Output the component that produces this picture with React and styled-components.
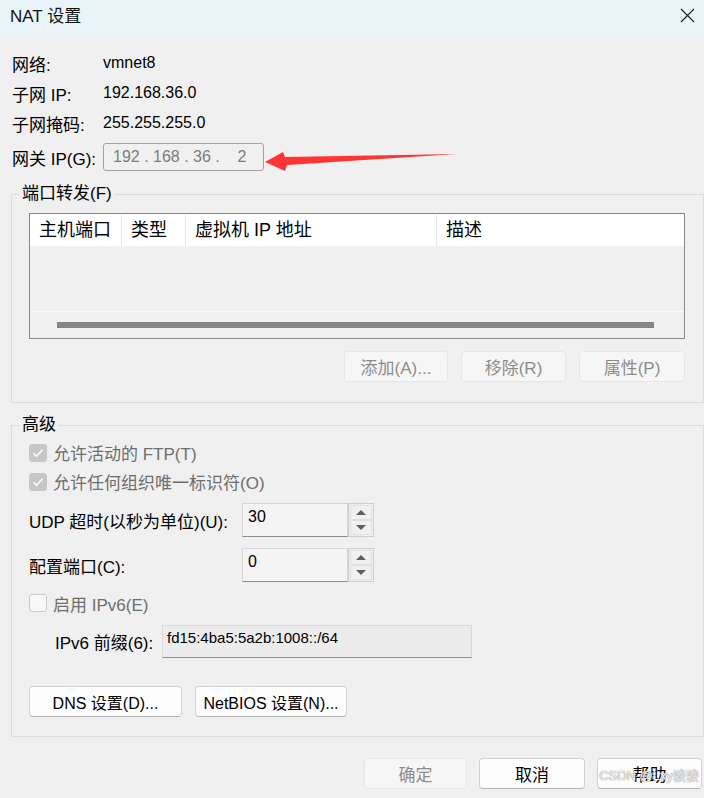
import styled, { createGlobalStyle } from "styled-components";

const GlobalStyle = createGlobalStyle`
  html, body {
    margin: 0;
    padding: 0;
    background: #f0f0f0;
  }
  body {
    font-family: "Liberation Sans", "Noto Sans CJK SC", sans-serif;
    color: #000;
  }
`;

const Window = styled.div`
  position: relative;
  width: 704px;
  height: 798px;
  overflow: hidden;
  background: #f0f0f0;
  display: flex;
  flex-direction: column;
`;

const TitleBar = styled.div`
  height: 38px;
  flex: none;
  box-sizing: border-box;
  padding: 2px 7px 0 10px;
  background: #e9f4f8;
  display: flex;
  align-items: flex-start;
  justify-content: space-between;
  font-size: 17px;
  color: #111;
`;

const CloseBtn = styled.div`
  width: 20px;
  height: 26px;
  display: flex;
  align-items: center;
  justify-content: center;
`;

const Body = styled.div`
  padding: 10px 0 0 11px;
  display: flex;
  flex-direction: column;
`;

const InfoGrid = styled.div`
  display: grid;
  grid-template-columns: 91px auto;
  grid-auto-rows: 30px;
  padding-left: 1px;
  align-items: center;
`;

const InfoLabel = styled.div`
  font-size: 17px;
`;

const InfoValue = styled.div`
  font-size: 16px;
`;

const GatewayRow = styled.div`
  display: flex;
  align-items: center;
  margin-top: 5px;
  padding-left: 1px;
  height: 28px;
`;

const IpBox = styled.div`
  width: 161px;
  height: 28px;
  box-sizing: border-box;
  border: 1px solid #a3a3a3;
  border-radius: 3px;
  background: #f0f0f0;
  color: #7c7c7c;
  font-size: 16px;
  line-height: 26px;
  padding-left: 9px;
  white-space: pre;
`;

const Arrow = styled.svg`
  position: absolute;
  left: 262px;
  top: 148px;
`;

const Group = styled.fieldset`
  margin: ${(p) => p.$top || 0}px 0 0 0;
  border: 1px solid #dcdcdc;
  padding: ${(p) => p.$padTop}px 18px ${(p) => p.$padBottom}px 17px;
  min-width: 0;
  display: flex;
  flex-direction: column;
`;

const Legend = styled.legend`
  font-size: 17px;
  line-height: 22px;
  padding: 0 2px;
  margin-left: -9px;
`;

const Table = styled.div`
  height: 126px;
  box-sizing: border-box;
  border: 1px solid #828790;
  background: #f0f0f0;
  display: flex;
  flex-direction: column;
`;

const HeaderRow = styled.div`
  height: 32px;
  background: #fff;
  display: grid;
  grid-template-columns: 92px 64px 251px 1fr;
`;

const HeaderCell = styled.div`
  font-size: 18px;
  line-height: 32px;
  padding-left: 9px;
  border-right: 1px solid #e8e8e8;
  white-space: nowrap;
  &:last-child {
    border-right: none;
  }
`;

const TableBody = styled.div`
  flex: 1;
`;

const HScroll = styled.div`
  height: 27px;
  border-top: 1px solid #fafafa;
  box-sizing: border-box;
  display: flex;
  align-items: center;
  padding: 0 30px 0 27px;
`;

const Thumb = styled.div`
  flex: 1;
  height: 6px;
  background: #858585;
`;

const ButtonRow = styled.div`
  display: flex;
  justify-content: ${(p) => (p.$left ? "flex-start" : "flex-end")};
  gap: ${(p) => p.$gap || 12}px;
  margin-top: ${(p) => p.$top || 0}px;
`;

const Button = styled.div`
  width: ${(p) => p.$w}px;
  height: 31px;
  box-sizing: border-box;
  border-radius: 4px;
  display: flex;
  align-items: center;
  justify-content: center;
  font-size: ${(p) => p.$size || 17}px;
  white-space: nowrap;
  background: ${(p) => (p.$disabled ? "#f6f6f6" : "#fdfdfd")};
  border: 1px solid ${(p) => (p.$disabled ? "#e6e6e6" : "#d2d2d2")};
  border-bottom-color: ${(p) => (p.$disabled ? "#e6e6e6" : "#b5b5b5")};
  color: ${(p) => (p.$disabled ? "#8c8c8c" : "#000")};
`;

const CheckRow = styled.div`
  height: ${(p) => p.$h || 29}px;
  margin-top: ${(p) => p.$top || 0}px;
  display: flex;
  align-items: center;
  gap: 6px;
  font-size: 17px;
  color: #6e6e6e;
`;

const Box = styled.div`
  width: 18px;
  height: 18px;
  box-sizing: border-box;
  border-radius: 3px;
  background: ${(p) => (p.$checked ? "#c7c7c7" : "#f8f8f8")};
  border: 1px solid ${(p) => (p.$checked ? "#c7c7c7" : "#cacaca")};
  display: flex;
  align-items: center;
  justify-content: center;
`;

const FieldRow = styled.div`
  display: grid;
  grid-template-columns: ${(p) => p.$label}px auto;
  align-items: center;
  margin-top: ${(p) => p.$top || 0}px;
  padding-left: ${(p) => p.$indent || 0}px;
  font-size: 17px;
`;

const Spinner = styled.div`
  width: 132px;
  height: 34px;
  display: flex;
`;

const SpinField = styled.div`
  flex: 1;
  box-sizing: border-box;
  background: #f4f4f4;
  border: 1px solid #d6d6d6;
  border-bottom: 1px solid #8d8d8d;
  font-size: 16px;
  padding: 4px 5px;
`;

const SpinButtons = styled.div`
  width: 26px;
  box-sizing: border-box;
  border: 1px solid #cfcfcf;
  background: #f0f0f0;
  display: flex;
  flex-direction: column;
  padding: 1px;
`;

const SpinHalf = styled.div`
  flex: 1;
  border: 1px solid #e0e0e0;
  display: flex;
  align-items: center;
  justify-content: center;
  &::after {
    content: "";
    border-left: 5px solid transparent;
    border-right: 5px solid transparent;
    ${(p) =>
      p.$down
        ? "border-top: 5px solid #5f5f5f;"
        : "border-bottom: 5px solid #5f5f5f;"}
  }
`;

const PrefixField = styled.div`
  width: 310px;
  height: 33px;
  box-sizing: border-box;
  background: #ececec;
  border: 1px solid #dadada;
  border-bottom: 1px solid #909090;
  font-size: 15px;
  padding: 3px 4px;
`;

const Footer = styled.div`
  display: flex;
  justify-content: flex-end;
  gap: 12px;
  padding: 21px 2px 0 0;
`;

const Watermark = styled.div`
  position: absolute;
  right: 5px;
  bottom: 14px;
  font-size: 13px;
  color: rgba(255, 255, 255, 0.9);
  text-shadow: 0 0 1px #8a8a8a, 0 0 1px #8a8a8a;
  white-space: nowrap;
`;

const Check = () => (
  <svg width="12" height="10" viewBox="0 0 12 10">
    <path d="M1.5 5.2 L4.6 8.2 L10.5 1.8" fill="none" stroke="#fff" strokeWidth="1.6" />
  </svg>
);

const Spin = ({ value }) => (
  <Spinner>
    <SpinField>{value}</SpinField>
    <SpinButtons>
      <SpinHalf />
      <SpinHalf $down />
    </SpinButtons>
  </Spinner>
);

export default function App() {
  return (
    <Window>
      <GlobalStyle />
      <TitleBar>
        <span>NAT 设置</span>
        <CloseBtn>
          <svg width="15" height="15" viewBox="0 0 15 15">
            <path d="M1 1 L14 14 M14 1 L1 14" stroke="#222" strokeWidth="1.2" />
          </svg>
        </CloseBtn>
      </TitleBar>

      <Body>
        <InfoGrid>
          <InfoLabel>网络:</InfoLabel>
          <InfoValue>vmnet8</InfoValue>
          <InfoLabel>子网 IP:</InfoLabel>
          <InfoValue>192.168.36.0</InfoValue>
          <InfoLabel>子网掩码:</InfoLabel>
          <InfoValue>255.255.255.0</InfoValue>
        </InfoGrid>
        <GatewayRow>
          <InfoLabel style={{ width: 91 }}>网关 IP(G):</InfoLabel>
          <IpBox>{"192 . 168 . 36 .    2"}</IpBox>
        </GatewayRow>

        <Group $top={12} $padTop={8} $padBottom={20}>
          <Legend>端口转发(F)</Legend>
          <Table>
            <HeaderRow>
              <HeaderCell>主机端口</HeaderCell>
              <HeaderCell>类型</HeaderCell>
              <HeaderCell>虚拟机 IP 地址</HeaderCell>
              <HeaderCell>描述</HeaderCell>
            </HeaderRow>
            <TableBody />
            <HScroll>
              <Thumb />
            </HScroll>
          </Table>
          <ButtonRow $top={12} $gap={13}>
            <Button $w={104} $disabled>添加(A)...</Button>
            <Button $w={105} $disabled>移除(R)</Button>
            <Button $w={106} $disabled>属性(P)</Button>
          </ButtonRow>
        </Group>

        <Group $top={11} $padTop={2} $padBottom={19}>
          <Legend>高级</Legend>
          <CheckRow>
            <Box $checked>
              <Check />
            </Box>
            允许活动的 FTP(T)
          </CheckRow>
          <CheckRow>
            <Box $checked>
              <Check />
            </Box>
            允许任何组织唯一标识符(O)
          </CheckRow>
          <FieldRow $label={213} $top={7}>
            <span>UDP 超时(以秒为单位)(U):</span>
            <Spin value="30" />
          </FieldRow>
          <FieldRow $label={213} $top={11}>
            <span>配置端口(C):</span>
            <Spin value="0" />
          </FieldRow>
          <CheckRow $h={28} $top={7}>
            <Box />
            启用 IPv6(E)
          </CheckRow>
          <FieldRow $label={107} $indent={26} $top={8}>
            <span>IPv6 前缀(6):</span>
            <PrefixField>fd15:4ba5:5a2b:1008::/64</PrefixField>
          </FieldRow>
          <ButtonRow $left $gap={13} $top={28}>
            <Button $w={153} $size={16}>DNS 设置(D)...</Button>
            <Button $w={152} $size={16}>NetBIOS 设置(N)...</Button>
          </ButtonRow>
        </Group>
      </Body>

      <Footer>
        <Button $w={103} $disabled>确定</Button>
        <Button $w={106}>取消</Button>
        <Button $w={105}>帮助</Button>
      </Footer>

      <Arrow width="200" height="30" viewBox="262 148 200 30">
        <polygon
          points="265,162 283,152 285,157 457,154 287,165 285,171"
          fill="#ff3434"
        />
      </Arrow>
      <Watermark>CSDN @Lxy骏骏</Watermark>
    </Window>
  );
}
